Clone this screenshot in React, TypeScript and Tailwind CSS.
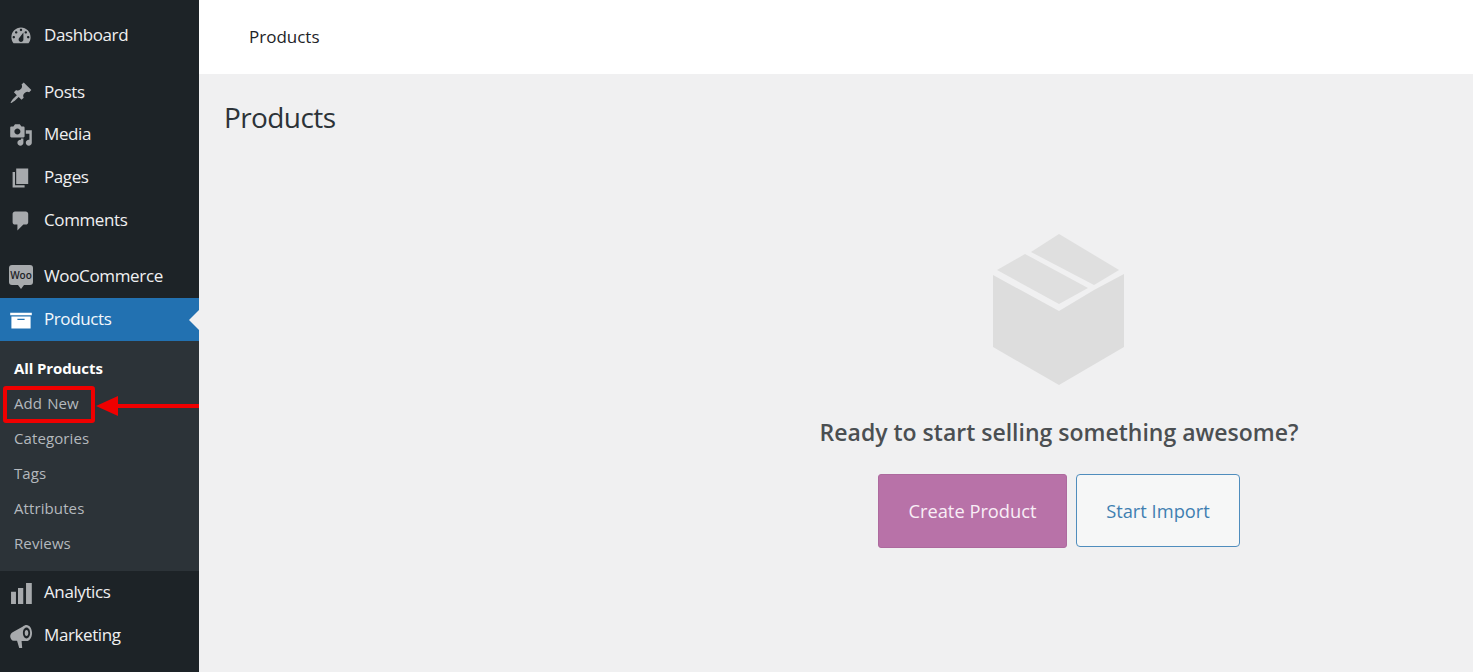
import React from "react";

const I: Record<string, string> = {
  dashboard:
    "M3.76 16h12.48c1.1-1.37 1.76-3.11 1.76-5 0-4.42-3.58-8-8-8s-8 3.58-8 8c0 1.89.66 3.63 1.76 5zM10 4c.55 0 1 .45 1 1s-.45 1-1 1-1-.45-1-1 .45-1 1-1zM6 6c.55 0 1 .45 1 1s-.45 1-1 1-1-.45-1-1 .45-1 1-1zm8 0c.55 0 1 .45 1 1s-.45 1-1 1-1-.45-1-1 .45-1 1-1zm-5.37 5.55L12 7v6c0 1.1-.9 2-2 2s-2-.9-2-2c0-.57.24-1.08.63-1.45zM4 10c.55 0 1 .45 1 1s-.45 1-1 1-1-.45-1-1 .45-1 1-1zm12 0c.55 0 1 .45 1 1s-.45 1-1 1-1-.45-1-1 .45-1 1-1z",
  post: "M10.44 3.02l1.82-1.82 6.36 6.35-1.83 1.82c-1.05-.68-2.48-.57-3.41.36l-.75.75c-.92.93-1.04 2.35-.35 3.41l-1.83 1.82-2.41-2.41-2.8 2.79c-.42.42-3.38 2.71-3.8 2.29s1.86-3.39 2.28-3.81l2.79-2.79L4.1 9.36l1.83-1.82c1.05.69 2.48.57 3.41-.36l.75-.75c.93-.92 1.04-2.35.35-3.41z",
  media:
    "M13 11V4c0-.55-.45-1-1-1h-1.67L9 1H5L3.67 3H2c-.55 0-1 .45-1 1v7c0 .55.45 1 1 1h10c.55 0 1-.45 1-1zM7 4.5c1.38 0 2.5 1.12 2.5 2.5S8.38 9.5 7 9.5 4.5 8.38 4.5 7 5.62 4.5 7 4.5zM14 6h5v10.5c0 1.38-1.12 2.5-2.5 2.5S14 17.88 14 16.5s1.12-2.5 2.5-2.5c.17 0 .34.02.5.05V9h-3V6zm-4 8.05V13h2v3.5c0 1.38-1.12 2.5-2.5 2.5S7 17.88 7 16.5 8.12 14 9.5 14c.17 0 .34.02.5.05z",
  page: "M6 15V2h10v13H6zm-1 1h8v2H3V5h2v11z",
  comments:
    "M5 2h9c1.1 0 2 .9 2 2v7c0 1.1-.9 2-2 2h-2l-5 5v-5H5c-1.1 0-2-.9-2-2V4c0-1.1.9-2 2-2z",
  archive: "M19 4v2H1V4h18zM2 7h16v10H2V7zm11 3V9H7v1h6z",
  chart: "M1.7 9h4.1v10.2H1.7zM7.5 5.8h4.4v13.4H7.5zM14.2 1.7H19v17.5h-4.8z",
  mega: "M14.6.8c2.5 0 4.6 3 4.6 6.7s-2.1 6.7-4.6 6.7h-4.1L11 20H8.5L6.7 14H4C2.2 14 1 12 1 10.2 1 8.5 2 7.4 3.4 6.6L11.6 2C12.6 1.3 13.5.8 14.6.8zM14.6 3c-1.6 0-3 2-3 4.5s1.4 4.5 3 4.5 3-2 3-4.5-1.4-4.5-3-4.5zM14.6 5c-.8 0-1.5 1.1-1.5 2.5s.7 2.5 1.5 2.5 1.5-1.1 1.5-2.5-.7-2.5-1.5-2.5z",
};

function Icon({ d, white }: { d: string; white?: boolean }) {
  return (
    <svg
      viewBox="0 0 20 20"
      className={`w-6 h-6 shrink-0 ${white ? "text-white" : "text-[#a7aaad]"}`}
      fill="currentColor"
      fillRule="evenodd"
    >
      <path d={d} />
    </svg>
  );
}

function Item({ d, label, rowClass = "h-[43px]" }: { d: string; label: string; rowClass?: string }) {
  return (
    <div
      className={`${rowClass} flex items-center pl-[9px] gap-[11px] text-[17px] tracking-[-0.4px] text-[#f0f0f1]`}
    >
      <Icon d={d} />
      <span className="pb-[2px]">{label}</span>
    </div>
  );
}

function Woo() {
  return (
    <div className="w-6 h-6 shrink-0 flex flex-col items-center">
      <div className="w-6 h-[22px] rounded-[3px] bg-[#a7aaad] flex items-center justify-center text-[10px] font-semibold tracking-normal leading-none text-[#1d2327]">
        Woo
      </div>
      <div className="w-0 h-0 border-t-[4px] border-t-[#a7aaad] border-x-[3px] border-x-transparent" />
    </div>
  );
}

const subs = ["All Products", "Add New", "Categories", "Tags", "Attributes", "Reviews"];

export default function App() {
  return (
    <div className="relative flex w-[1473px] h-[672px] overflow-hidden bg-[#f0f0f1] font-['Open_Sans','Noto_Sans',sans-serif]">
      <aside className="w-[199px] shrink-0 bg-[#1d2327] pt-[14px]">
        <Item d={I.dashboard} label="Dashboard" />
        <div className="h-[15px]" />
        <Item d={I.post} label="Posts" rowClass="h-[41px]" />
        <Item d={I.media} label="Media" />
        <Item d={I.page} label="Pages" />
        <Item d={I.comments} label="Comments" />
        <div className="h-[13px]" />
        <div className="h-[43px] flex items-center pl-[9px] gap-[11px] text-[17px] tracking-[-0.35px] text-[#f0f0f1]">
          <Woo />
          <span className="pb-[2px]">WooCommerce</span>
        </div>
        <div className="relative h-[43px] flex items-center pl-[9px] gap-[11px] text-[17px] tracking-[-0.4px] text-[#f3f8fc] bg-[#2271b1]">
          <Icon d={I.archive} white />
          <span className="pb-[2px]">Products</span>
          <div className="absolute right-0 top-[12px] w-0 h-0 border-y-[10px] border-y-transparent border-r-[10px] border-r-[#f0f0f1]" />
        </div>
        <div className="bg-[#2c3338] pt-[9.2px] pb-[9.8px]">
          {subs.map((s, i) => (
            <div
              key={s}
              className={`h-[35.2px] flex items-center pl-[14px] text-[15px] ${
                i === 0
                  ? "font-bold tracking-[-0.1px] text-white"
                  : "tracking-[0.1px] [word-spacing:1px] text-[#b4b9be]"
              }`}
            >
              {s}
            </div>
          ))}
        </div>
        <Item d={I.chart} label="Analytics" />
        <Item d={I.mega} label="Marketing" />
      </aside>

      <main className="flex-1 min-w-0 flex flex-col">
        <header className="h-[74px] bg-white flex items-center pl-[50px] text-[17px] text-[#1d2327]">
          Products
        </header>
        <h1 className="pl-[25px] pt-[23px] text-[28px] tracking-[-0.6px] leading-[40px] font-normal text-[#2c3338]">
          Products
        </h1>
        <div className="pl-[446px] pt-[97px] flex flex-col items-center">
          <svg viewBox="0 0 134 154" className="w-[134px] h-[154px]">
            <path
              fill="#dddddd"
              d="M1 41 L67 77 L102 56 L132 40 L132 113 L67 151 L1 113Z"
            />
            <path fill="#dfdfdf" d="M67 0 L127 36 L102 51 L39 18Z" />
            <path fill="#dfdfdf" d="M33 20 L96 54 L67 70 L5 36Z" />
          </svg>
          <h2 className="mt-[27px] text-[23px] leading-[34px] font-semibold text-[#4b4f52] whitespace-nowrap">
            Ready to start selling something awesome?
          </h2>
          <div className="mt-[25px] flex gap-[9px]">
            <button className="w-[189px] h-[74px] rounded-[3px] bg-[#b872a8] border border-[#ad6a9e] text-[#f8eef6] text-[18.3px]">
              Create Product
            </button>
            <button className="w-[164px] h-[73px] rounded-[4px] bg-[#f6f7f7] border border-[#4f8dbd] text-[#3f7fb1] text-[18.3px]">
              Start Import
            </button>
          </div>
        </div>
      </main>

      <div className="absolute left-[3px] top-[386px] w-[92px] h-[37px] border-[4px] border-[#f00000] rounded-[3px]" />
      <div className="absolute left-[96px] top-[396px] w-0 h-0 border-y-[10px] border-y-transparent border-r-[22px] border-r-[#f00000]" />
      <div className="absolute left-[116px] top-[404px] w-[83px] h-[4px] bg-[#f00000]" />
    </div>
  );
}
